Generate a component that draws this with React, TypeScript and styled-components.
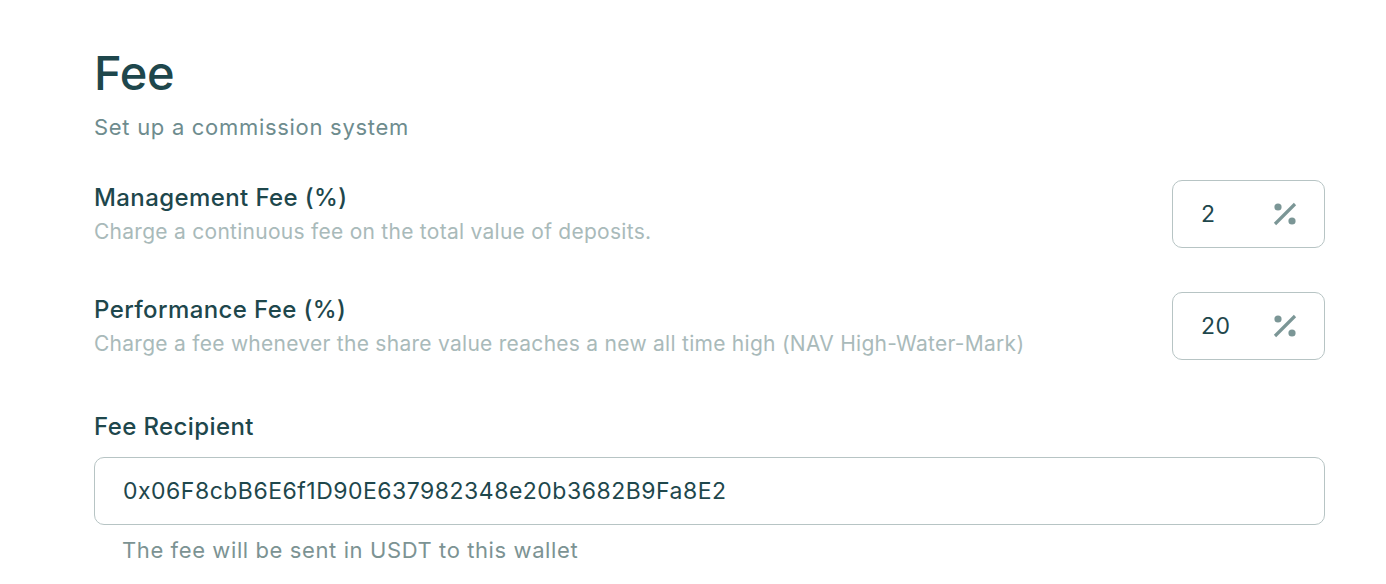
import React from "react";
import styled, { createGlobalStyle } from "styled-components";

const GlobalStyle = createGlobalStyle`
  html, body { margin: 0; padding: 0; background: #ffffff; }
  body { font-family: Inter, "Noto Sans", sans-serif; -webkit-font-smoothing: antialiased; }
  * { box-sizing: border-box; }
`;

const Page = styled.div`
  padding: 44px 61px 0 94px;
  display: flex;
  flex-direction: column;
`;

const Title = styled.h1`
  margin: 0;
  font-size: 47px;
  line-height: 58px;
  font-weight: 500;
  color: #1e474c;
  letter-spacing: -0.3px;
`;

const Subtitle = styled.p`
  margin: 11px 0 0;
  font-size: 22px;
  line-height: 28px;
  letter-spacing: 0.7px;
  color: #6e8c8e;
`;

const Row = styled.div<{ $top: number }>`
  margin-top: ${(p) => p.$top}px;
  display: flex;
  align-items: center;
  justify-content: space-between;
`;

const TextBlock = styled.div`
  display: flex;
  flex-direction: column;
  gap: 5px;
`;

const Label = styled.div`
  font-size: 24px;
  line-height: 30px;
  font-weight: 500;
  letter-spacing: 0.4px;
  color: #1e474c;
`;

const Description = styled.div`
  font-size: 21px;
  line-height: 28px;
  letter-spacing: 0.27px;
  color: #a9baba;
`;

const Box = styled.div<{ $wide?: boolean }>`
  height: 68px;
  width: ${(p) => (p.$wide ? "100%" : "153px")};
  margin-top: ${(p) => (p.$wide ? "15px" : "0")};
  border: 1px solid #b7c4c4;
  border-radius: 10px;
  display: flex;
  align-items: center;
  justify-content: space-between;
  padding: ${(p) => (p.$wide ? "0 28px" : "0 26px 0 28px")};
  color: #1e474c;
`;

const Value = styled.span`
  font-size: 23px;
  letter-spacing: 0.5px;
  color: #1e474c;
`;

const Section = styled.div`
  margin-top: 52px;
  display: flex;
  flex-direction: column;
`;

const Helper = styled.div`
  margin: 11px 0 0 28px;
  font-size: 22px;
  line-height: 28px;
  letter-spacing: 0.6px;
  color: #7c9393;
`;

const PercentIcon = () => (
  <svg width="26" height="26" viewBox="0 0 26 26">
    <circle cx="6" cy="6" r="3.6" fill="#7b9696" />
    <circle cx="20" cy="20" r="3.6" fill="#7b9696" />
    <line x1="3" y1="23" x2="23" y2="3" stroke="#7b9696" strokeWidth="3.2" strokeLinecap="butt" />
  </svg>
);

const FeeRow = ({ top, label, desc, value }: { top: number; label: string; desc: string; value: string }) => (
  <Row $top={top}>
    <TextBlock>
      <Label>{label}</Label>
      <Description>{desc}</Description>
    </TextBlock>
    <Box>
      <Value>{value}</Value>
      <PercentIcon />
    </Box>
  </Row>
);

export default function App() {
  return (
    <>
      <GlobalStyle />
      <Page>
        <Title>Fee</Title>
        <Subtitle>Set up a commission system</Subtitle>
        <FeeRow
          top={39}
          label="Management Fee (%)"
          desc="Charge a continuous fee on the total value of deposits."
          value="2"
        />
        <FeeRow
          top={44}
          label="Performance Fee (%)"
          desc="Charge a fee whenever the share value reaches a new all time high (NAV High-Water-Mark)"
          value="20"
        />
        <Section>
          <Label>Fee Recipient</Label>
          <Box $wide>
            <Value>0x06F8cbB6E6f1D90E637982348e20b3682B9Fa8E2</Value>
          </Box>
          <Helper>The fee will be sent in USDT to this wallet</Helper>
        </Section>
      </Page>
    </>
  );
}
